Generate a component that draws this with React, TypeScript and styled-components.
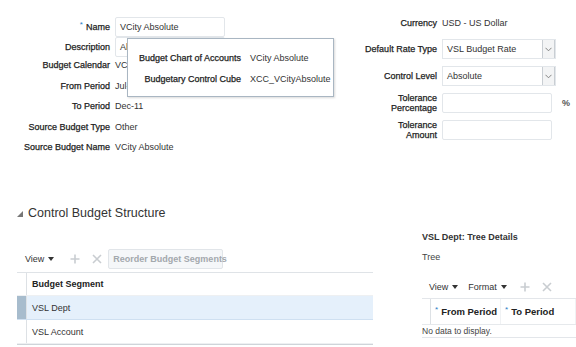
import React from 'react'
import styled, { createGlobalStyle } from 'styled-components'

const Global = createGlobalStyle`
  html, body {
    margin: 0;
    padding: 0;
    background: #fff;
  }
  body {
    font-family: "Liberation Sans", Arial, sans-serif;
    color: #333;
  }
`

const Page = styled.div`
  position: relative;
  width: 576px;
  height: 347px;
  overflow: hidden;
  background: #fff;
  font-size: 9px;
`

const TopArea = styled.div`
  position: relative;
  display: flex;
  height: 203px;
`

const LeftForm = styled.div`
  display: grid;
  grid-template-columns: 110px 110px;
  grid-auto-rows: 20.5px;
  column-gap: 5px;
  padding-top: 14px;
  width: 240px;
  align-content: start;
`

const RightForm = styled.div`
  display: grid;
  grid-template-columns: 72px 114px 15px;
  grid-template-rows: 18px repeat(4, 20px);
  column-gap: 5px;
  row-gap: 7px;
  padding-top: 14px;
  margin-left: auto;
  align-content: start;
`

const Label = styled.div<{ $h?: number }>`
  display: flex;
  align-items: center;
  justify-content: flex-end;
  text-align: right;
  color: #222;
  line-height: 10px;
  white-space: nowrap;
  -webkit-text-stroke: 0.25px #222;
  ${p => p.$h ? `height: ${p.$h}px;` : ''}
`

const Value = styled.div<{ $h?: number }>`
  display: flex;
  align-items: center;
  color: #333;
  white-space: nowrap;
  ${p => p.$h ? `height: ${p.$h}px;` : ''}
`

const Req = styled.span`
  color: #2a7dc6;
  margin-right: 3px;
  font-weight: normal;
  -webkit-text-stroke: 0;
  position: relative;
  top: -2px;
  font-size: 8px;
`

const InputBox = styled.div<{ $w?: number }>`
  box-sizing: border-box;
  width: ${p => p.$w || 110}px;
  height: 20px;
  border: 1px solid #e2e6ea;
  border-radius: 2px;
  background: #fff;
  display: flex;
  align-items: center;
  padding-left: 4px;
  color: #333;
  white-space: nowrap;
  overflow: hidden;
  align-self: center;
`

const SelectBox = styled.div`
  box-sizing: border-box;
  width: 114px;
  height: 20px;
  border: 1px solid #e2e6ea;
  background: #fff;
  display: flex;
  align-items: center;
  padding-left: 4px;
  color: #333;
`

const SelectText = styled.span`
  flex: 1;
`

const SelectButton = styled.div`
  box-sizing: border-box;
  width: 13px;
  height: 18px;
  border-left: 1px solid #c9ced3;
  border-right: 1px solid #c9ced3;
  background: #f3f4f5;
  display: flex;
  align-items: center;
  justify-content: center;
`

const Percent = styled.div`
  display: flex;
  align-items: center;
  font-weight: bold;
  color: #555;
  margin-left: 1px;
`

const Popup = styled.div`
  position: absolute;
  left: 127px;
  top: 38px;
  box-sizing: border-box;
  width: 207px;
  height: 59px;
  background: #fff;
  border: 1px solid #a9b6c2;
  box-shadow: 1px 1px 2px rgba(0, 0, 0, 0.15);
  display: grid;
  grid-template-columns: 103px 1fr;
  grid-auto-rows: 21px;
  column-gap: 9px;
  padding: 8px 0 0 10px;
`

const SectionHeader = styled.div`
  display: flex;
  align-items: center;
  height: 20px;
  padding-left: 17px;
  font-size: 12.5px;
  color: #333;
`

const Twisty = styled.span`
  width: 0;
  height: 0;
  border-left: 6px solid transparent;
  border-bottom: 6px solid #777;
  margin-right: 5px;
  margin-top: 2px;
`

const Panels = styled.div`
  display: flex;
  align-items: flex-start;
  margin-top: 5px;
`

const SegmentPanel = styled.div`
  margin-left: 17px;
  margin-top: 21px;
  width: 356px;
`

const Toolbar = styled.div<{ $pad?: number; $top?: number }>`
  display: flex;
  align-items: center;
  height: 20px;
  padding-left: ${p => p.$pad ?? 8}px;
  margin-top: ${p => p.$top ?? 0}px;
  gap: 10px;
`

const Menu = styled.span`
  display: flex;
  align-items: center;
  gap: 4px;
  color: #333;
`

const Caret = styled.span`
  width: 0;
  height: 0;
  border-left: 3px solid transparent;
  border-right: 3px solid transparent;
  border-top: 4px solid #333;
`

const IconButton = styled.span<{ $left?: number }>`
  display: flex;
  align-items: center;
  justify-content: center;
  width: 12px;
  height: 12px;
  margin-left: ${p => p.$left ?? 0}px;
`

const ReorderButton = styled.div`
  box-sizing: border-box;
  height: 20px;
  padding: 0 4px;
  margin-left: -5px;
  display: flex;
  align-items: center;
  border: 1px solid #e1e5e9;
  border-radius: 2px;
  background: #f5f7f9;
  color: #a3a8ad;
  font-weight: bold;
  white-space: nowrap;
  width: 115px;
`

const Table = styled.div`
  margin-top: 3px;
  border-top: 1px solid #dfe3e7;
  border-bottom: 1px solid #cfd4d9;
`

const TableRow = styled.div<{ $h: number; $selected?: boolean; $header?: boolean }>`
  display: flex;
  height: ${p => p.$h}px;
  background: ${p => p.$selected ? '#e5f0fb' : '#fff'};
  border-bottom: 1px solid ${p => p.$selected ? '#cfe0f1' : '#eef0f2'};
  box-sizing: border-box;
  font-weight: ${p => p.$header ? 'bold' : 'normal'};
  color: ${p => p.$header ? '#222' : '#333'};
`

const Gutter = styled.div<{ $selected?: boolean; $w?: number }>`
  width: ${p => p.$w ?? 9}px;
  flex-shrink: 0;
  background: ${p => p.$selected ? '#a7bccd' : 'transparent'};
  border-right: 1px solid #dde1e5;
`

const Cell = styled.div`
  display: flex;
  align-items: center;
  padding-left: 5px;
  flex: 1;
  white-space: nowrap;
`

const TreePanel = styled.div`
  margin-left: 49px;
  flex: 1;
`

const TreeTitle = styled.div`
  height: 18px;
  display: flex;
  align-items: center;
  font-weight: bold;
  color: #333;
`

const TreeLabel = styled.div`
  height: 18px;
  margin-top: 2px;
  display: flex;
  align-items: center;
  color: #444;
`

const TreeTable = styled.div`
  margin-top: 1px;
  border-top: 1px solid #e3e6ea;
`

const TreeHeader = styled.div`
  display: flex;
  height: 25px;
  border-bottom: 1px solid #e6e9ec;
  font-weight: bold;
  font-size: 9.5px;
  color: #222;
`

const TreeHeadCell = styled.div<{ $w?: number }>`
  display: flex;
  align-items: center;
  padding-left: 4px;
  ${p => p.$w ? `width: ${p.$w}px;` : 'flex: 1;'}
  border-right: 1px solid #f0f2f4;
  white-space: nowrap;
`

const NoData = styled.div`
  height: 12px;
  display: flex;
  align-items: center;
  color: #444;
  font-size: 8.5px;
  border-bottom: 1px solid #e3e6ea;
`

const Chevron = () => (
  <svg width="7" height="5" viewBox="0 0 7 5">
    <path d="M0.5 0.8 L3.5 3.8 L6.5 0.8" fill="none" stroke="#777" strokeWidth="0.9" />
  </svg>
)

const Plus = () => (
  <svg width="10" height="10" viewBox="0 0 10 10">
    <path d="M5 0.5 V9.5 M0.5 5 H9.5" stroke="#c9cdd1" strokeWidth="1.6" />
  </svg>
)

const Cross = () => (
  <svg width="10" height="10" viewBox="0 0 10 10">
    <path d="M1 1 L9 9 M9 1 L1 9" stroke="#c9cdd1" strokeWidth="1.6" />
  </svg>
)

const leftRows = [
  { label: 'Budget Calendar', value: 'VCity Absolute' },
  { label: 'From Period', value: 'Jul-11' },
  { label: 'To Period', value: 'Dec-11' },
  { label: 'Source Budget Type', value: 'Other' },
  { label: 'Source Budget Name', value: 'VCity Absolute' },
]

const segments = ['VSL Dept', 'VSL Account']

const App = () => {
  return (
    <Page>
      <Global />
      <TopArea>
        <LeftForm>
          <Label $h={26}><Req>*</Req>Name</Label>
          <Value $h={26}><InputBox>VCity Absolute</InputBox></Value>
          <Label $h={25}>Description</Label>
          <Value $h={25}><InputBox>Absolute</InputBox></Value>
          {leftRows.map(row => (
            <React.Fragment key={row.label}>
              <Label>{row.label}</Label>
              <Value>{row.value}</Value>
            </React.Fragment>
          ))}
        </LeftForm>

        <RightForm>
          <Label>Currency</Label>
          <Value>USD - US Dollar</Value>
          <span />
          <Label>Default Rate Type</Label>
          <SelectBox>
            <SelectText>VSL Budget Rate</SelectText>
            <SelectButton><Chevron /></SelectButton>
          </SelectBox>
          <span />
          <Label>Control Level</Label>
          <SelectBox>
            <SelectText>Absolute</SelectText>
            <SelectButton><Chevron /></SelectButton>
          </SelectBox>
          <span />
          <Label>Tolerance<br />Percentage</Label>
          <InputBox $w={110} />
          <Percent>%</Percent>
          <Label>Tolerance<br />Amount</Label>
          <InputBox $w={110} />
          <span />
        </RightForm>

        <Popup>
          <Label>Budget Chart of Accounts</Label>
          <Value>VCity Absolute</Value>
          <Label>Budgetary Control Cube</Label>
          <Value>XCC_VCityAbsolute</Value>
        </Popup>
      </TopArea>

      <SectionHeader>
        <Twisty />
        Control Budget Structure
      </SectionHeader>

      <Panels>
        <SegmentPanel>
          <Toolbar>
            <Menu>View <Caret /></Menu>
            <IconButton $left={5}><Plus /></IconButton>
            <IconButton><Cross /></IconButton>
            <ReorderButton>Reorder Budget Segments</ReorderButton>
          </Toolbar>
          <Table>
            <TableRow $h={23} $header>
              <Gutter />
              <Cell>Budget Segment</Cell>
            </TableRow>
            {segments.map((name, i) => (
              <TableRow key={name} $h={24} $selected={i === 0}>
                <Gutter $selected={i === 0} />
                <Cell>{name}</Cell>
              </TableRow>
            ))}
          </Table>
        </SegmentPanel>

        <TreePanel>
          <TreeTitle>VSL Dept: Tree Details</TreeTitle>
          <TreeLabel>Tree</TreeLabel>
          <Toolbar $pad={7} $top={11}>
            <Menu>View <Caret /></Menu>
            <Menu>Format <Caret /></Menu>
            <IconButton $left={2}><Plus /></IconButton>
            <IconButton><Cross /></IconButton>
          </Toolbar>
          <TreeTable>
            <TreeHeader>
              <Gutter $w={8} />
              <TreeHeadCell $w={65}><Req>*</Req>From Period</TreeHeadCell>
              <TreeHeadCell><Req>*</Req>To Period</TreeHeadCell>
            </TreeHeader>
            <NoData>No data to display.</NoData>
          </TreeTable>
        </TreePanel>
      </Panels>
    </Page>
  )
}

export default App
